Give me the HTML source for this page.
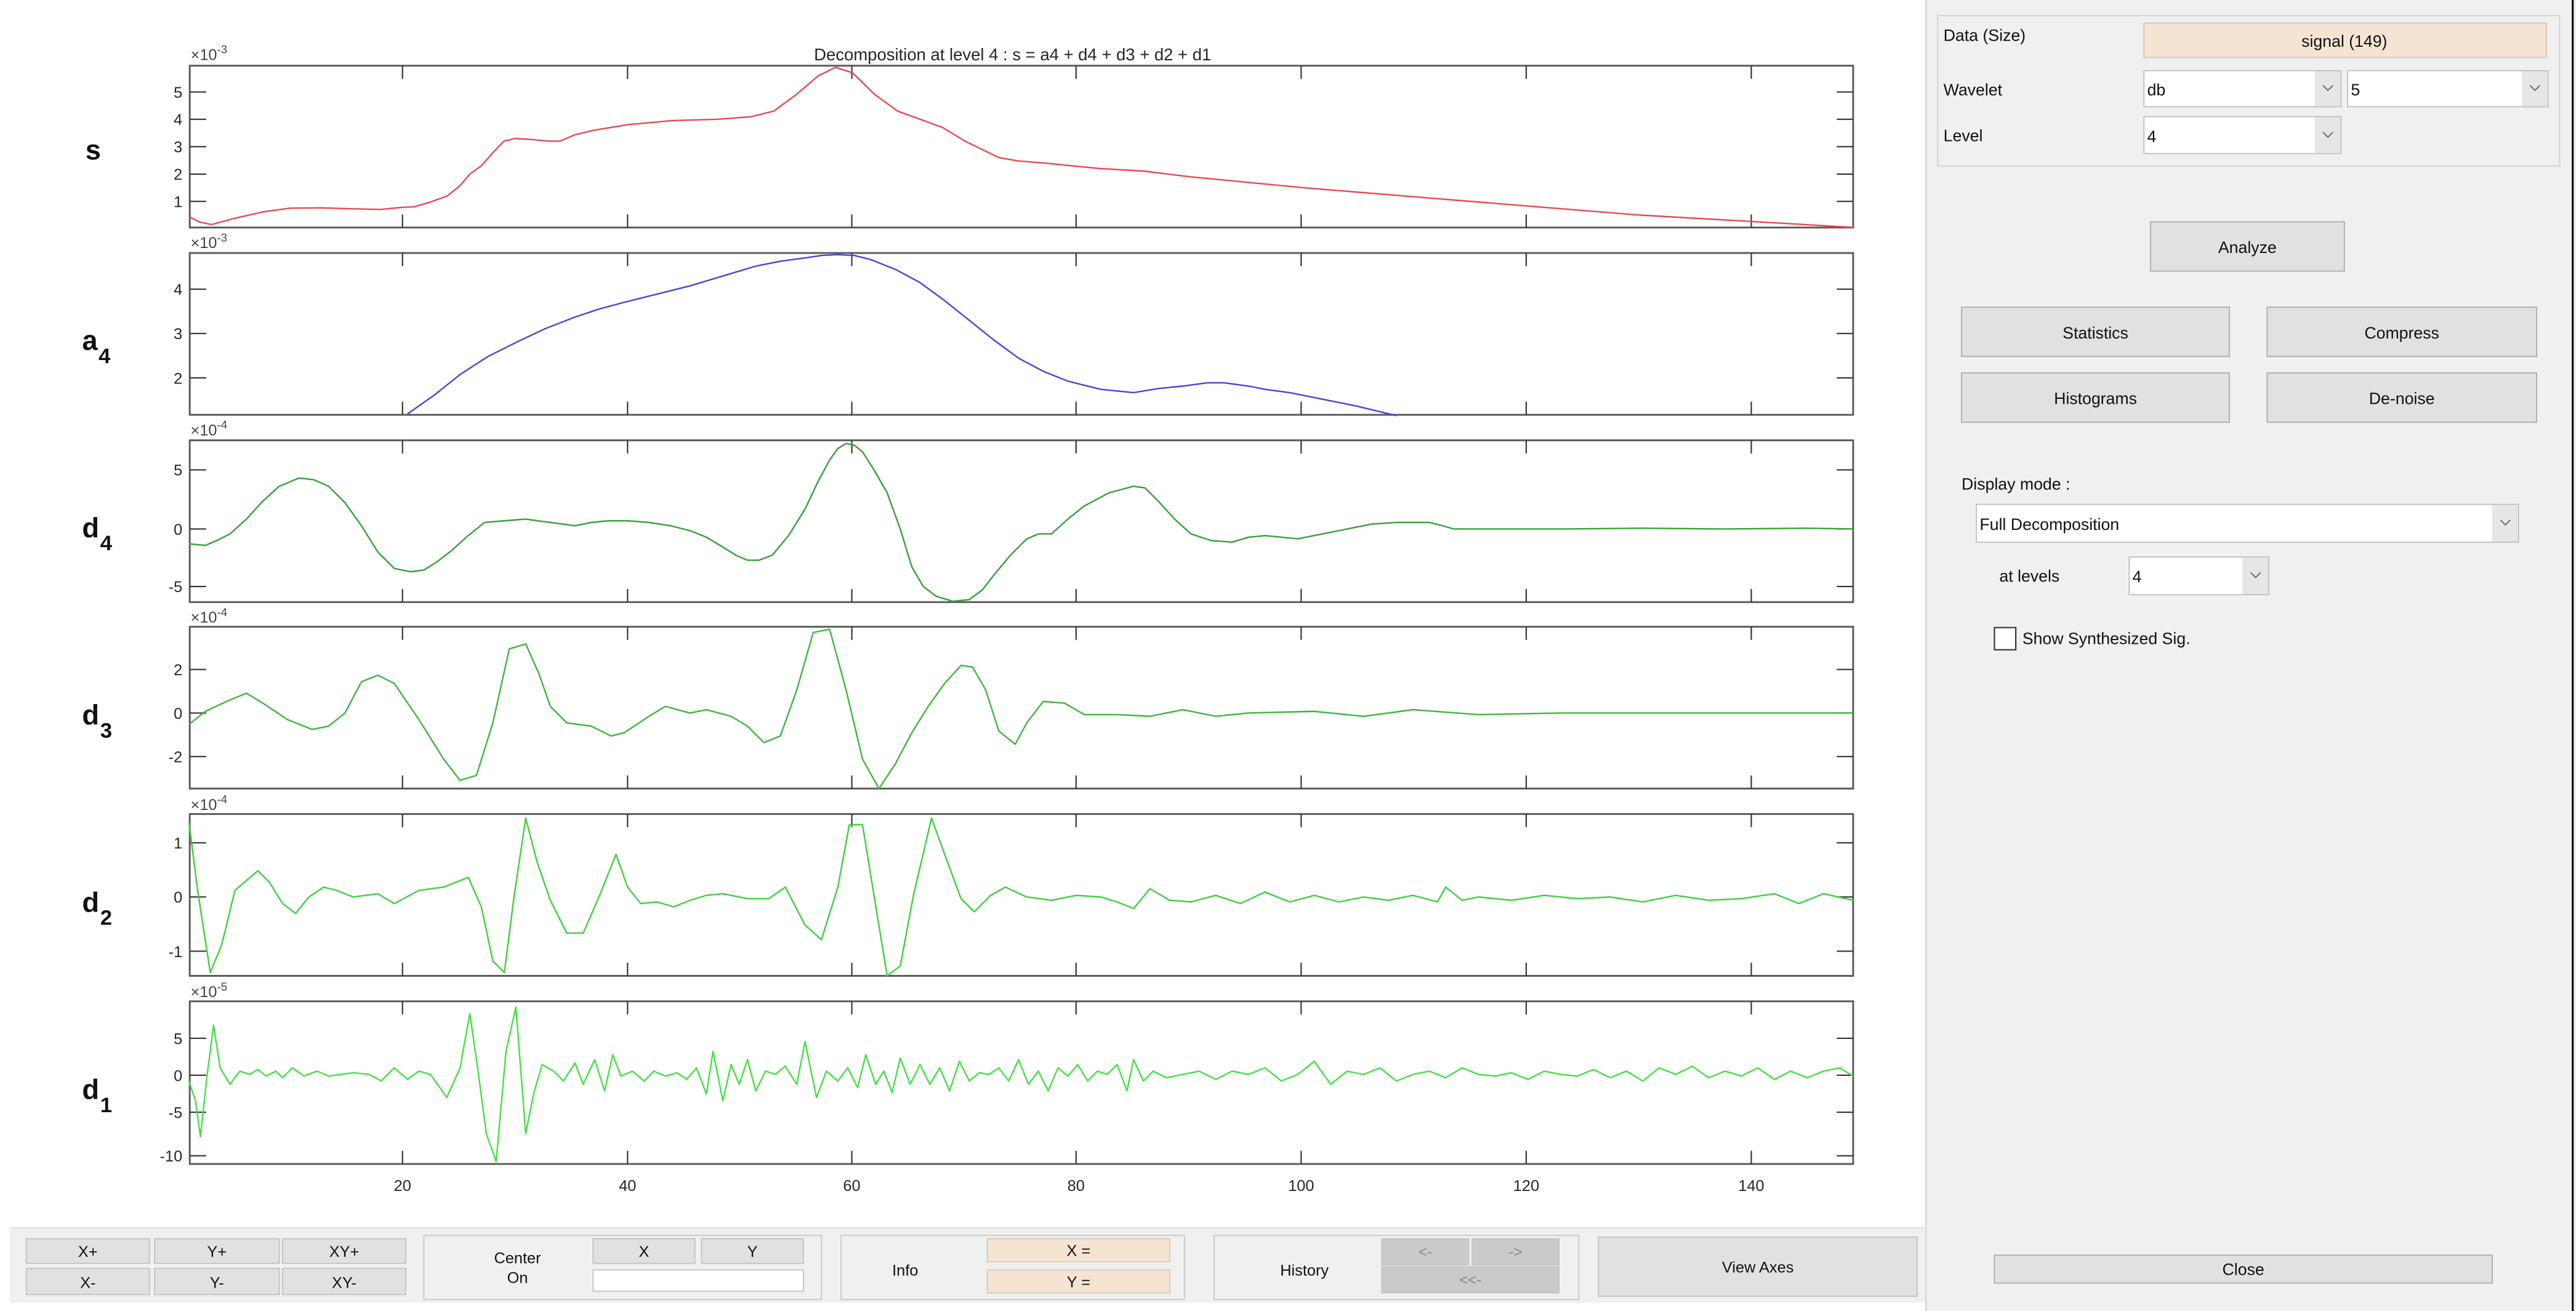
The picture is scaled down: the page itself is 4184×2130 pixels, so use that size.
<!DOCTYPE html>
<html><head><meta charset="utf-8"><style>
html,body{margin:0;padding:0;background:#fff;}
svg{display:block;}
text{font-family:"Liberation Sans",Arial,sans-serif;}
</style></head><body>
<svg width="4184" height="2130" viewBox="0 0 1568 798" preserveAspectRatio="none" xmlns="http://www.w3.org/2000/svg">
<rect x="0" y="0" width="1568" height="798" fill="#fff"/>

<!-- Title -->
<text x="495.5" y="36.7" font-size="10.3" fill="#262626">Decomposition at level 4 : s = a4 + d4 + d3 + d2 + d1</text>

<!-- Left labels -->
<g font-weight="bold" fill="#111">
<text x="52" y="97" font-size="17">s</text>
<text x="50" y="213" font-size="17">a</text><text x="60" y="221" font-size="13">4</text>
<text x="50" y="327" font-size="17">d</text><text x="61" y="335" font-size="13">4</text>
<text x="50" y="441" font-size="17">d</text><text x="61" y="449" font-size="13">3</text>
<text x="50" y="555" font-size="17">d</text><text x="61" y="563" font-size="13">2</text>
<text x="50" y="669" font-size="17">d</text><text x="61" y="677" font-size="13">1</text>
</g>

<!-- exponent labels -->
<g fill="#444" font-size="9.5">
<text x="116" y="36.5">×10<tspan dy="-4" font-size="7">-3</tspan></text>
<text x="116" y="151">×10<tspan dy="-4" font-size="7">-3</tspan></text>
<text x="116" y="265">×10<tspan dy="-4" font-size="7">-4</tspan></text>
<text x="116" y="379">×10<tspan dy="-4" font-size="7">-4</tspan></text>
<text x="116" y="493">×10<tspan dy="-4" font-size="7">-4</tspan></text>
<text x="116" y="607">×10<tspan dy="-4" font-size="7">-5</tspan></text>
</g>

<!-- Axes boxes -->
<g fill="none" stroke="#595959" stroke-width="1.1">
<rect x="115.5" y="40" width="1012.5" height="98.5"/>
<rect x="115.5" y="154" width="1012.5" height="98.5"/>
<rect x="115.5" y="268" width="1012.5" height="98.5"/>
<rect x="115.5" y="381.5" width="1012.5" height="98.5"/>
<rect x="115.5" y="495.5" width="1012.5" height="98.5"/>
<rect x="115.5" y="609.5" width="1012.5" height="99"/>
</g>

<!-- X ticks top & bottom for each panel -->
<g stroke="#333" stroke-width="0.8">
<path d="M245 40v8M382 40v8M518.5 40v8M655 40v8M792 40v8M929 40v8M1066 40v8
M245 138.5v-8M382 138.5v-8M518.5 138.5v-8M655 138.5v-8M792 138.5v-8M929 138.5v-8M1066 138.5v-8
M245 154v8M382 154v8M518.5 154v8M655 154v8M792 154v8M929 154v8M1066 154v8
M245 252.5v-8M382 252.5v-8M518.5 252.5v-8M655 252.5v-8M792 252.5v-8M929 252.5v-8M1066 252.5v-8
M245 268v8M382 268v8M518.5 268v8M655 268v8M792 268v8M929 268v8M1066 268v8
M245 366.5v-8M382 366.5v-8M518.5 366.5v-8M655 366.5v-8M792 366.5v-8M929 366.5v-8M1066 366.5v-8
M245 381.5v8M382 381.5v8M518.5 381.5v8M655 381.5v8M792 381.5v8M929 381.5v8M1066 381.5v8
M245 480v-8M382 480v-8M518.5 480v-8M655 480v-8M792 480v-8M929 480v-8M1066 480v-8
M245 495.5v8M382 495.5v8M518.5 495.5v8M655 495.5v8M792 495.5v8M929 495.5v8M1066 495.5v8
M245 594v-8M382 594v-8M518.5 594v-8M655 594v-8M792 594v-8M929 594v-8M1066 594v-8
M245 609.5v8M382 609.5v8M518.5 609.5v8M655 609.5v8M792 609.5v8M929 609.5v8M1066 609.5v8
M245 708.5v-8M382 708.5v-8M518.5 708.5v-8M655 708.5v-8M792 708.5v-8M929 708.5v-8M1066 708.5v-8"/>
</g>
<!-- Y ticks left & right -->
<g stroke="#333" stroke-width="0.8">
<path d="M115.5 56h10M115.5 72.6h10M115.5 89.3h10M115.5 106h10M115.5 122.6h10
M1128 56h-10M1128 72.6h-10M1128 89.3h-10M1128 106h-10M1128 122.6h-10
M115.5 176h10M115.5 203h10M115.5 230h10M1128 176h-10M1128 203h-10M1128 230h-10
M115.5 286h10M115.5 322h10M115.5 357h10M1128 286h-10M1128 322h-10M1128 357h-10
M115.5 407.5h10M115.5 434h10M115.5 460.5h10M1128 407.5h-10M1128 434h-10M1128 460.5h-10
M115.5 513h10M115.5 546h10M115.5 579h10M1128 513h-10M1128 546h-10M1128 579h-10
M115.5 632h10M115.5 654.5h10M115.5 677h10M115.5 703.5h10M1128 632h-10M1128 654.5h-10M1128 677h-10M1128 703.5h-10"/>
</g>

<!-- Y tick labels -->
<g fill="#262626" font-size="9.5" text-anchor="end">
<text x="111" y="59.5">5</text><text x="111" y="76">4</text><text x="111" y="92.7">3</text><text x="111" y="109.4">2</text><text x="111" y="126">1</text>
<text x="111" y="179.5">4</text><text x="111" y="206.5">3</text><text x="111" y="233.5">2</text>
<text x="111" y="289.5">5</text><text x="111" y="325.5">0</text><text x="111" y="360.5">-5</text>
<text x="111" y="411">2</text><text x="111" y="437.5">0</text><text x="111" y="464">-2</text>
<text x="111" y="516.5">1</text><text x="111" y="549.5">0</text><text x="111" y="582.5">-1</text>
<text x="111" y="635.5">5</text><text x="111" y="658">0</text><text x="111" y="680.5">-5</text><text x="111" y="707">-10</text>
</g>
<!-- X tick labels -->
<g fill="#262626" font-size="9.5" text-anchor="middle">
<text x="245" y="725">20</text><text x="382" y="725">40</text><text x="518.5" y="725">60</text><text x="655" y="725">80</text><text x="792" y="725">100</text><text x="929" y="725">120</text><text x="1066" y="725">140</text>
</g>

<!-- Curves -->
<g fill="none" stroke-width="0.9" stroke-linejoin="round">
<polyline stroke="#e8494f" points="115,131.7 121,135 128.7,136.7 142.4,133 160,129 176.6,126.7 195,126.5 210.8,127 231.4,127.5 245,126.2 251.9,125.9 262,123 272.4,119.2 280,113 286.1,105.9 293,100.9 300,93 306.7,85.9 313.5,84.3 322,84.8 334,85.9 340.9,85.9 350,82 361.4,79.3 382,75.9 409.3,73.4 436.7,72.6 457.3,71 471,67.6 484.6,57.6 498.3,46 508.6,41 518.9,44.3 532.6,57.6 546.3,67.6 560,72.6 573.7,77.6 587.4,85.9 607.9,95.9 620,98 635.3,99.2 669.5,102.6 696.9,104.2 724.2,107.6 792.7,114.2 895.4,122.6 998,130.9 1128,138.4"/>
<polyline stroke="#4545d8" points="248,252 265,240 280,228 297,217 315,208 332,200 350,193 365,188 380,184 400,179 420,174 440,168 460,162 475,159 490,157 500,155.5 510,155 520,155.5 530,158 545,164 560,172 575,183 590,195 605,207 620,218 635,226 650,232 670,237 690,239 705,236.5 720,235 735,233 745,233 760,235 770,237 785,239 800,242 825,247 850,253"/>
<polyline stroke="#3a9e3a" points="115,331 125,332 132,329 140,325 150,316 160,305 170,296 182,291 191,292 200,296 210,306 220,320 230,336 240,346 250,348 258,347 266,342 275,335 285,326 295,318 307,317 320,316 335,318 350,320 360,318 370,317 382,317 395,318 408,320 420,323 430,327 440,333 448,338 455,341 462,341 470,338 480,326 490,310 498,293 505,280 510,273 515,270 520,271 525,275 532,286 540,300 548,322 555,345 562,357 570,363 580,366 590,365 598,359 605,350 615,338 625,328 632,325 640,325 650,316 660,308 675,300 690,296 697,297 705,305 715,316 725,325 737,329 750,330 760,327 770,326 780,327 790,328 805,325 820,322 835,319 850,318 862,318 870,318 878,320 885,322 900,322 950,322 1000,321.5 1050,322 1100,321.5 1128,322"/>
<polyline stroke="#3fb43f" points="115,441 125,433 140,426 150,422 160,428 175,438 190,444 200,442 210,434 220,415 230,411 240,416 255,438 270,462 280,475 290,472 300,440 310,395 320,392 328,410 335,430 345,440 360,442 372,448 380,446 395,436 405,430 420,434 430,432 445,436 455,442 465,452 475,448 485,420 495,385 505,383 515,420 525,462 535,480 545,465 555,446 565,430 575,416 585,405 592,406 600,420 608,445 618,453 625,440 635,427 648,428 660,435 680,435 700,436 720,432 740,436 760,434 800,433 830,436 860,432 900,435 950,434 1000,434 1128,434"/>
<polyline stroke="#3fcf3f" points="115,500 120,540 128,592 135,575 143,542 150,536 157,530 164,537 172,550 180,556 188,546 197,540 205,542 215,546 230,544 240,550 255,542 270,540 285,534 293,552 300,585 307,592 313,545 320,498 327,525 335,548 345,568 355,568 365,545 375,520 382,540 390,550 400,549 410,552 420,548 430,545 440,544 455,547 468,547 478,540 490,563 500,572 510,540 517,502 525,502 532,545 540,594 548,588 556,545 567,498 575,520 585,547 593,555 603,545 612,540 625,546 640,548 655,545 670,546 680,549 690,553 700,541 712,548 725,549 740,545 755,550 770,543 785,549 800,545 815,549 830,546 845,548 860,545 875,549 880,540 890,548 900,546 920,548 940,545 960,547 980,546 1000,549 1020,545 1040,548 1060,547 1080,544 1095,550 1110,544 1128,548"/>
<polyline stroke="#44e044" points="115,658 119,670 122,692 126,655 130,624 134,650 140,660 146,652 152,654 157,651 162,655 168,652 172,656 178,650 185,655 193,652 200,655 207,654 215,653 225,654 232,658 240,650 248,657 255,652 262,654 272,668 280,650 286,617 291,652 296,690 302,707 308,640 314,613 320,690 325,665 330,648 337,652 343,658 350,647 355,660 362,645 368,664 373,642 378,655 385,652 392,658 398,652 405,655 412,653 418,657 424,650 430,666 434,640 440,670 445,648 450,660 455,645 460,664 466,652 472,654 478,649 485,660 490,634 497,668 503,652 510,658 516,650 522,662 527,642 533,660 538,652 543,665 548,644 554,660 560,648 566,660 572,650 578,664 584,646 590,658 596,653 602,654 608,650 614,658 620,645 626,660 632,652 638,664 644,650 650,655 656,648 662,658 668,652 674,654 680,648 686,664 690,645 696,658 702,652 710,656 720,654 730,652 740,657 750,652 760,654 770,650 780,658 790,654 800,646 810,660 820,652 830,654 840,650 850,658 860,654 870,652 880,656 890,650 900,654 910,655 920,653 930,657 940,652 950,654 960,655 970,651 980,656 990,652 1000,658 1010,650 1020,654 1030,649 1040,656 1050,652 1060,655 1070,650 1080,657 1090,652 1100,656 1110,652 1120,650 1128,655"/>
</g>

<!-- Right panel -->
<rect x="1172" y="0" width="396" height="798" fill="#f0f0f0"/>
<line x1="1172.3" y1="0" x2="1172.3" y2="798" stroke="#d0d0d0" stroke-width="0.8"/>
<line x1="1566" y1="0" x2="1566" y2="798" stroke="#111" stroke-width="1.2"/>
<rect x="1179.5" y="9.5" width="378.5" height="91.5" fill="none" stroke="#d5d5d5" stroke-width="0.8"/>
<g font-size="10" fill="#111">
<text x="1183" y="25">Data  (Size)</text>
<text x="1183" y="58">Wavelet</text>
<text x="1183" y="86">Level</text>
</g>
<rect x="1305" y="14" width="245" height="21" fill="#f6e4d3" stroke="#c8c0b8" stroke-width="0.6"/>
<text x="1427" y="28.5" font-size="10" fill="#111" text-anchor="middle">signal  (149)</text>
<!-- dropdowns -->
<g stroke="#b8b8b8" stroke-width="0.6">
<rect x="1305" y="43" width="120" height="22" fill="#fff"/>
<rect x="1409" y="43.3" width="15.7" height="21.4" fill="#e6e6e6" stroke="none"/>
<rect x="1429" y="43" width="122" height="22" fill="#fff"/>
<rect x="1535" y="43.3" width="15.7" height="21.4" fill="#e6e6e6" stroke="none"/>
<rect x="1305" y="71" width="120" height="22.5" fill="#fff"/>
<rect x="1409" y="71.3" width="15.7" height="22" fill="#e6e6e6" stroke="none"/>
<rect x="1203" y="307" width="330" height="23" fill="#fff"/>
<rect x="1517" y="307.3" width="15.7" height="22.4" fill="#e6e6e6" stroke="none"/>
<rect x="1296" y="339" width="85" height="23" fill="#fff"/>
<rect x="1365" y="339.3" width="15.7" height="22.4" fill="#e6e6e6" stroke="none"/>
</g>
<g fill="none" stroke="#666" stroke-width="0.7">
<path d="M1414 52l3 3l3-3M1540 52l3 3l3-3M1414 80.5l3 3l3-3M1522 316.5l3 3l3-3M1370 348.5l3 3l3-3"/>
</g>
<g font-size="10" fill="#111">
<text x="1307" y="58">db</text>
<text x="1431" y="58">5</text>
<text x="1307" y="86.5">4</text>
<text x="1205" y="322.5">Full Decomposition</text>
<text x="1298" y="354.5">4</text>
<text x="1194" y="298">Display mode :</text>
<text x="1217" y="354">at levels</text>
<text x="1231" y="342" dy="0" style="display:none"></text>
<text x="1231" y="392">Show Synthesized Sig.</text>
</g>
<rect x="1214" y="382" width="13" height="13.5" fill="#fff" stroke="#333" stroke-width="0.8"/>
<!-- buttons -->
<g fill="#e1e1e1" stroke="#adadad" stroke-width="0.7">
<rect x="1309" y="135" width="118" height="30"/>
<rect x="1194" y="187" width="163" height="30"/>
<rect x="1380" y="187" width="164" height="30"/>
<rect x="1194" y="227" width="163" height="30"/>
<rect x="1380" y="227" width="164" height="30"/>
<rect x="1214" y="764" width="303" height="17"/>
</g>
<g font-size="10" fill="#111" text-anchor="middle">
<text x="1368" y="154">Analyze</text>
<text x="1275.5" y="206">Statistics</text>
<text x="1462" y="206">Compress</text>
<text x="1275.5" y="246">Histograms</text>
<text x="1462" y="246">De-noise</text>
<text x="1365.5" y="776">Close</text>
</g>

<!-- Bottom bar -->
<rect x="6" y="747" width="1166" height="46" fill="#f0f0f0"/>
<line x1="6" y1="747.3" x2="1172" y2="747.3" stroke="#dcdcdc" stroke-width="0.7"/>
<g fill="#f0f0f0" stroke="#c8c8c8" stroke-width="0.7">
<rect x="258" y="752" width="242" height="39"/>
<rect x="512" y="752" width="209" height="39"/>
<rect x="739" y="752" width="222" height="39"/>
</g>
<g fill="#e1e1e1" stroke="#bdbdbd" stroke-width="0.6">
<rect x="16" y="754" width="75" height="15"/><rect x="94" y="754" width="76" height="15"/><rect x="172" y="754" width="75" height="15"/>
<rect x="16" y="772" width="75" height="16"/><rect x="94" y="772" width="76" height="16"/><rect x="172" y="772" width="75" height="16"/>
<rect x="361" y="754" width="62" height="15"/><rect x="427" y="754" width="62" height="15"/>
<rect x="973" y="753" width="194" height="36"/>
</g>
<rect x="361" y="773" width="128" height="13" fill="#fff" stroke="#bdbdbd" stroke-width="0.6"/>
<g fill="#f6e4d3" stroke="#cfc5bb" stroke-width="0.6">
<rect x="601" y="754" width="111" height="14"/><rect x="601" y="773" width="111" height="14"/>
</g>
<g fill="#cacaca" stroke="#bdbdbd" stroke-width="0.5">
<rect x="841" y="754" width="53" height="16"/><rect x="896" y="754" width="53" height="16"/><rect x="841" y="771" width="108" height="16"/>
</g>
<g font-size="9.5" fill="#111" text-anchor="middle">
<text x="53.5" y="765">X+</text><text x="132" y="765">Y+</text><text x="209.5" y="765">XY+</text>
<text x="53.5" y="784">X-</text><text x="132" y="784">Y-</text><text x="209.5" y="784">XY-</text>
<text x="315" y="769">Center</text><text x="315" y="781">On</text>
<text x="392" y="765">X</text><text x="458" y="765">Y</text>
<text x="551" y="776.5">Info</text>
<text x="656.5" y="764.5">X =</text><text x="656.5" y="783.5">Y =</text>
<text x="794" y="776.5">History</text>
<text x="1070" y="774.5">View Axes</text>
</g>
<g font-size="9" fill="#888" text-anchor="middle">
<text x="867.5" y="765">&lt;-</text><text x="922.5" y="765">-&gt;</text><text x="895" y="782">&lt;&lt;-</text>
</g>
</svg>
</body></html>
